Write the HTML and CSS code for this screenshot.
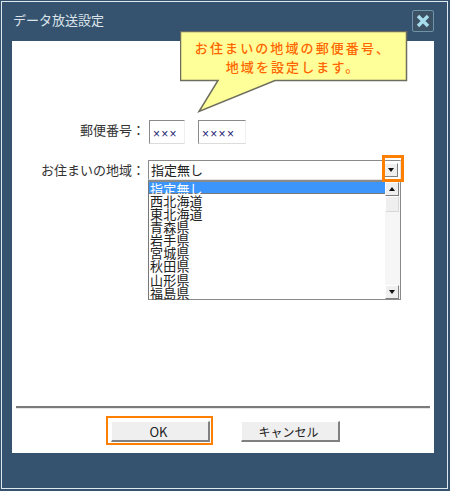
FILE: index.html
```html
<!DOCTYPE html>
<html lang="ja">
<head>
  <meta charset="UTF-8"/>
  <title>データ放送設定</title>
  <link rel="stylesheet" href="styles.css">
</head>
<body>
  <div class="window">
    <div class="titlebar">
      <span class="title">データ放送設定</span>
      <div class="close">
        <svg width="16" height="16" viewBox="0 0 16 16"><path d="M3 3 L13 13 M13 3 L3 13" stroke="#a6dcec" stroke-width="3.4" fill="none"/></svg>
      </div>
    </div>

    <div class="panel">
      <div class="form">
        <div class="row row-zip">
          <label class="label">郵便番号：</label>
          <div class="zip zip-short">×××</div>
          <div class="zip zip-long">××××</div>
        </div>
        <div class="row row-area">
          <label class="label">お住まいの地域：</label>
          <div class="combo">
            <div class="combo-box">
              <span class="combo-value">指定無し</span>
              <div class="sb-btn"><span class="arrow-down"></span></div>
            </div>
            <div class="list">
              <ul class="list-items">
                <li class="selected">指定無し</li>
                <li>西北海道</li>
                <li>東北海道</li>
                <li>青森県</li>
                <li>岩手県</li>
                <li>宮城県</li>
                <li>秋田県</li>
                <li>山形県</li>
                <li>福島県</li>
              </ul>
              <div class="scrollbar">
                <div class="sb-btn"><span class="arrow-up"></span></div>
                <div class="sb-thumb"></div>
                <div class="sb-track"></div>
                <div class="sb-btn"><span class="arrow-down"></span></div>
              </div>
            </div>
          </div>
        </div>
      </div>

      <div class="divider"></div>

      <div class="buttons">
        <div class="ok-mark"><button class="btn">OK</button></div>
        <button class="btn btn-cancel">キャンセル</button>
      </div>
    </div>

    <!-- callout and orange mark sit on top of the dialog -->
    <div class="callout">
      <svg class="callout-shape" width="230" height="84" viewBox="0 0 230 84">
        <path d="M.5 .5 H226.500 V49.500 H95 L19 80.500 L38 49.500 H.5 Z" fill="#ffff99" stroke="#6e6e5e" stroke-width="1.500"/>
      </svg>
      <p class="callout-text">お住まいの地域の郵便番号、<br>地域を設定します。</p>
    </div>
    <div class="drop-mark"></div>
  </div>
</body>
</html>
```

FILE: styles.css
```css
* { box-sizing: border-box; }
html, body { margin: 0; padding: 0; }
body {
  width: 450px;
  height: 491px;
  font-family: "Noto Sans CJK JP", "Liberation Sans", sans-serif;
  color: #222;
  background: #35536f;
  overflow: hidden;
}
.window {
  position: relative;
  width: 449px;
  height: 490px;
  padding: 0 14px 0 11px;
  background: #35536f;
  border: 1px solid #35536f;
  outline: 1px solid #dfe8ee;
  outline-offset: -2px;
}

/* title */
.titlebar {
  display: flex;
  align-items: flex-start;
  justify-content: space-between;
  height: 40px;
}
.title {
  margin: 10px 0 0 1px;
  font-size: 13px;
  line-height: 18px;
  color: #dbe4ea;
}
.close {
  display: flex;
  align-items: center;
  justify-content: center;
  width: 22px;
  height: 22px;
  margin-top: 9px;
  background: #3d5164;
  border: 1px solid #6d94aa;
  border-radius: 2px;
}

/* white area */
.panel {
  width: 422px;
  height: 412px;
  background: #fff;
  display: flex;
  flex-direction: column;
}
.form { height: 365px; padding-top: 78px; }
.row { display: flex; }
.label {
  width: 133px;
  text-align: right;
  font-size: 13px;
  line-height: 20px;
  color: #333;
}
.row-zip { height: 41px; align-items: flex-start; }
.row-zip .label { margin-top: 1px; }
.zip {
  height: 24px;
  margin-top: 1px;
  padding: 6px 0 0 3px;
  font-family: "Liberation Sans", sans-serif;
  font-size: 12px;
  line-height: 14px;
  letter-spacing: 1.3px;
  color: #1a1a70;
  border-top: 1px solid #8a8a8a;
  border-left: 1px solid #8a8a8a;
  border-right: 1px solid #f0f0f0;
  border-bottom: 1px solid #dcdcdc;
}
.zip-short { width: 36px; margin-left: 4px; margin-right: 13px; }
.zip-long { width: 48px; }

/* combo + list */
.combo { width: 253px; margin-left: 3px; }
.combo-box {
  display: flex;
  align-items: center;
  justify-content: space-between;
  height: 20px;
  padding: 0 2px 0 2px;
  border: 1px solid #8a8a8a;
  border-right-color: #e4e4e4;
  border-bottom-color: #e4e4e4;
}
.combo-value { font-size: 13px; line-height: 18px; color: #222; }
.list {
  display: flex;
  height: 120px;
  border: 1px solid #8a8a8a;
  border-top-width: 2px;
  border-left-color: #777;
}
.list-items {
  flex: 1;
  margin: 0;
  padding: 0;
  list-style: none;
  font-size: 13px;
  letter-spacing: .2px;
  line-height: 13.100px;
  color: #222;
}
.list-items li { height: 13.100px; padding-left: 1px; white-space: nowrap; }
.list-items .selected {
  height: 12px;
  color: #fff;
  background: #3b95fb;
  border-bottom: 1px solid #777;
}
.scrollbar {
  display: flex;
  flex-direction: column;
  width: 15px;
  background: #f6f6f6;
}
.sb-btn, .sb-thumb {
  width: 14px;
  background: #efefef;
  border: 1px solid #fff;
  border-right-color: #808080;
  border-bottom-color: #808080;
}
.sb-btn {
  display: flex;
  align-items: center;
  justify-content: center;
  height: 14px;
  flex: none;
}
.sb-thumb { height: 16px; flex: none; margin-bottom: 1px; border-right-color: #d8d8d8; border-bottom-color: #d8d8d8; }
.sb-track { flex: 1; }
.arrow-down, .arrow-up {
  width: 0;
  height: 0;
  border-left: 3.500px solid transparent;
  border-right: 3.500px solid transparent;
}
.arrow-down { border-top: 4px solid #111; }
.arrow-up { border-bottom: 4px solid #111; }

/* bottom */
.divider {
  width: 414px;
  height: 2px;
  margin-left: 4px;
  background: #7b7b7b;
  box-shadow: 0 1px 0 #e6e6e6;
}
.buttons { display: flex; align-items: flex-start; padding: 8px 0 0 94px; }
.ok-mark {
  display: flex;
  width: 107px;
  height: 29px;
  padding: 3px 0 0 3px;
  border: 2px solid #ff8000;
}
.btn {
  width: 99px;
  height: 21px;
  padding: 0 3px 0 0;
  font-family: "Noto Sans CJK JP", "Liberation Sans", sans-serif;
  font-size: 13px;
  line-height: 17px;
  color: #222;
  background: #efefef;
  border: 1px solid #fff;
  border-right: 2px solid #808080;
  border-bottom: 2px solid #808080;
}
.btn-cancel { margin-left: 28px; margin-top: 5px; font-size: 12px; }

/* overlays */
.callout { position: absolute; left: 179px; top: 30px; width: 230px; height: 84px; }
.callout-shape { position: absolute; left: 0; top: 0; }
.callout-text {
  position: relative;
  margin: 0;
  padding-top: 7px;
  width: 226px;
  text-align: center;
  font-size: 13px;
  line-height: 19px;
  letter-spacing: 2.100px;
  color: #ff6600;
  font-weight: 500;
}
.drop-mark {
  position: absolute;
  left: 381px;
  top: 154px;
  width: 22px;
  height: 27px;
  border: 3px solid #ff8000;
}
```
